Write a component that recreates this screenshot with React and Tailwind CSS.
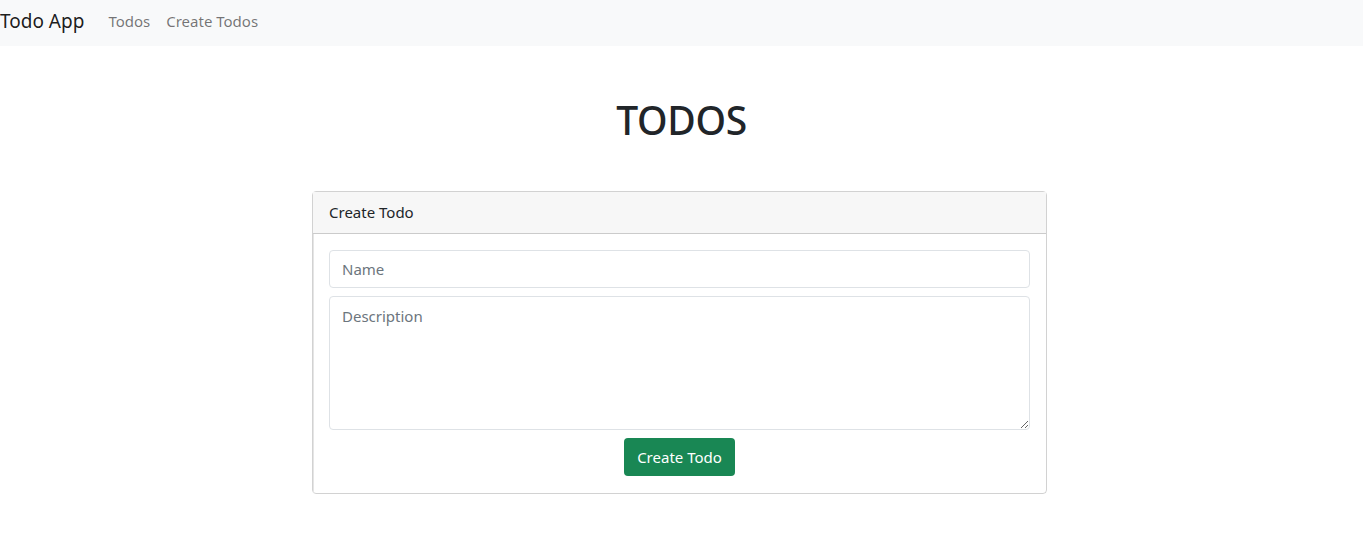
export default function App() {
  return (
    <div className="min-h-screen bg-white text-[#212529]" style={{ fontFamily: '"Noto Sans", "Open Sans", sans-serif' }}>
      {/* Navbar */}
      <nav className="flex h-[46px] items-center bg-[#f8f9fa] pb-[4px]">
        <span className="mr-[24px] text-[19px] leading-[30px] text-[rgba(0,0,0,0.9)]">Todo App</span>
        <a className="mr-[16px] text-[15px] text-[rgba(0,0,0,0.55)]">Todos</a>
        <a className="text-[15px] text-[rgba(0,0,0,0.55)]">Create Todos</a>
      </nav>

      <h1 className="mt-[50px] text-center text-[39px] font-medium leading-[48px] tracking-[-0.3px]">TODOS</h1>

      {/* Card */}
      <div className="mt-[47px] flex justify-center pr-[4px]">
        <div className="w-[735px] rounded-[4px] border border-[rgba(0,0,0,0.175)]">
          <div className="flex h-[42px] items-center border-b border-[rgba(0,0,0,0.175)] bg-[#f7f7f7] px-[16px] text-[15px]">
            Create Todo
          </div>
          <div className="flex flex-col gap-[8px] px-[16px] pt-[16px] pb-[17px] shadow-[inset_1px_0_0_#e5e5e5]">
            <input
              placeholder="Name"
              className="h-[38px] w-full rounded-[4px] border border-[#dee2e6] px-[12px] text-[15px] outline-none placeholder:text-[#6c757d]"
            />
            <textarea
              placeholder="Description"
              className="h-[134px] w-full rounded-[4px] border border-[#dee2e6] px-[12px] py-[8px] text-[15px] outline-none placeholder:text-[#6c757d]"
            />
            <div className="flex justify-center">
              <button className="h-[38px] rounded-[4px] bg-[#198754] px-[13px] text-[15px] text-white">
                Create Todo
              </button>
            </div>
          </div>
        </div>
      </div>
    </div>
  );
}
